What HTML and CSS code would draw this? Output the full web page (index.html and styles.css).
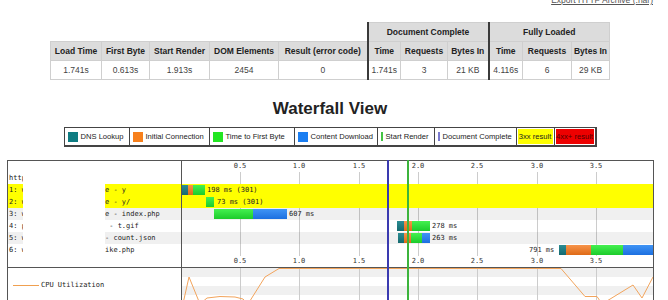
FILE: index.html
```html
<!DOCTYPE html>
<html lang="en">
  <head>
    <meta charset="UTF-8" />
    <title>Waterfall View</title>
    <link rel="stylesheet" href="styles.css">
  </head>
  <body>
    <div class="page">
      <div class="export"><a href="#">Export HTTP Archive (.har)</a></div>

      <table class="stats">
        <colgroup>
          <col class="c1"><col class="c2"><col class="c3"><col class="c4"><col class="c5">
          <col class="c6"><col class="c7"><col class="c8">
          <col class="c9"><col class="c10"><col class="c11">
        </colgroup>
        <tr>
          <th colspan="5" class="blank"></th>
          <th colspan="3" class="sep">Document Complete</th>
          <th colspan="3" class="sep">Fully Loaded</th>
        </tr>
        <tr>
          <th>Load Time</th><th>First Byte</th><th>Start Render</th><th>DOM Elements</th><th>Result (error code)</th>
          <th class="sep">Time</th><th>Requests</th><th>Bytes In</th>
          <th class="sep">Time</th><th>Requests</th><th>Bytes In</th>
        </tr>
        <tr>
          <td>1.741s</td><td>0.613s</td><td>1.913s</td><td>2454</td><td>0</td>
          <td class="sep">1.741s</td><td>3</td><td>21 KB</td>
          <td class="sep">4.116s</td><td>6</td><td>29 KB</td>
        </tr>
      </table>

      <h2 class="title">Waterfall View</h2>

      <div class="legend">
        <div class="lg w1"><span class="sw dns"></span>DNS Lookup</div>
        <div class="lg w2"><span class="sw conn"></span>Initial Connection</div>
        <div class="lg w3"><span class="sw ttfb"></span>Time to First Byte</div>
        <div class="lg w4"><span class="sw dl"></span>Content Download</div>
        <div class="lg w5"><span class="mark render"></span>Start Render</div>
        <div class="lg w6"><span class="mark doc"></span>Document Complete</div>
        <div class="lg w7"><span class="hl yellow">3xx result</span></div>
        <div class="lg w8"><span class="hl red">4xx+ result</span></div>
      </div>

      <div class="wf">
        <div class="row axis">
          <div class="lbl"></div>
          <div class="track">
            <span class="tk" style="left:58px">0.5</span>
            <span class="tk" style="left:117px">1.0</span>
            <span class="tk" style="left:177px">1.5</span>
            <span class="tk" style="left:236px">2.0</span>
            <span class="tk" style="left:295px">2.5</span>
            <span class="tk" style="left:355px">3.0</span>
            <span class="tk" style="left:414px">3.5</span>
          </div>
        </div>

        <div class="rows">
          <div class="grid">
            <i class="gl" style="left:58px"></i>
            <i class="gl" style="left:117px"></i>
            <i class="gl" style="left:177px"></i>
            <i class="gl" style="left:236px"></i>
            <i class="gl" style="left:295px"></i>
            <i class="gl" style="left:355px"></i>
            <i class="gl" style="left:414px"></i>
          </div>

          <div class="row">
            <div class="lbl"><span class="la">http</span><span class="gap"></span><span class="lb"></span></div>
            <div class="track"></div>
          </div>

          <div class="row redirect">
            <div class="lbl"><span class="la">1: w</span><span class="gap"></span><span class="lb">e - y</span></div>
            <div class="track">
              <div class="bar" style="left:0"><i class="dns" style="width:6px"></i><i class="conn" style="width:5px"></i><i class="ttfb" style="width:12px"></i></div>
              <span class="ms" style="left:25px">198 ms (301)</span>
            </div>
          </div>

          <div class="row redirect">
            <div class="lbl"><span class="la">2: w</span><span class="gap"></span><span class="lb">e - y/</span></div>
            <div class="track">
              <div class="bar" style="left:24px"><i class="ttfb" style="width:8px"></i></div>
              <span class="ms" style="left:35px">73 ms (301)</span>
            </div>
          </div>

          <div class="row odd">
            <div class="lbl"><span class="la">3: w</span><span class="gap"></span><span class="lb">e - index.php</span></div>
            <div class="track">
              <div class="bar" style="left:32px"><i class="ttfb" style="width:39px"></i><i class="dl" style="width:34px"></i></div>
              <span class="ms" style="left:107px">607 ms</span>
            </div>
          </div>

          <div class="row">
            <div class="lbl"><span class="la">4: p</span><span class="gap"></span><span class="lb"> - t.gif</span></div>
            <div class="track">
              <div class="bar" style="left:215px"><i class="dns" style="width:7px"></i><i class="conn" style="width:8px"></i><i class="ttfb" style="width:18px"></i></div>
              <span class="ms" style="left:250px">278 ms</span>
            </div>
          </div>

          <div class="row odd">
            <div class="lbl"><span class="la">5: w</span><span class="gap"></span><span class="lb">- count.json</span></div>
            <div class="track">
              <div class="bar" style="left:216px"><i class="dns" style="width:6px"></i><i class="conn" style="width:7px"></i><i class="ttfb" style="width:11px"></i><i class="dl" style="width:8px"></i></div>
              <span class="ms" style="left:250px">263 ms</span>
            </div>
          </div>

          <div class="row">
            <div class="lbl"><span class="la">6: w</span><span class="gap"></span><span class="lb">ike.php</span></div>
            <div class="track">
              <span class="ms" style="left:347px">791 ms</span>
              <div class="bar" style="left:377px"><i class="dns" style="width:7px"></i><i class="conn" style="width:25px"></i><i class="ttfb" style="width:32px"></i><i class="dl" style="width:30px"></i></div>
            </div>
          </div>
        </div>

        <div class="row axis">
          <div class="lbl"></div>
          <div class="track">
            <span class="tk" style="left:58px">0.5</span>
            <span class="tk" style="left:117px">1.0</span>
            <span class="tk" style="left:177px">1.5</span>
            <span class="tk" style="left:236px">2.0</span>
            <span class="tk" style="left:295px">2.5</span>
            <span class="tk" style="left:355px">3.0</span>
            <span class="tk" style="left:414px">3.5</span>
          </div>
        </div>

        <div class="cpu">
          <div class="cpu-lbl"><span class="cpu-key"></span>CPU Utilization</div>
          <div class="track">
            <svg width="471" height="56" viewBox="0 0 471 56">
              <rect x="0" y="0" width="471" height="9" fill="#f0f0f0"/>
              <rect x="0" y="18" width="471" height="9" fill="#f0f0f0"/>
              <rect x="0" y="36" width="471" height="9" fill="#f0f0f0"/>
              <g stroke="#cccccc" stroke-width="1">
                <line x1="58.5" y1="0" x2="58.5" y2="56"/>
                <line x1="117.5" y1="0" x2="117.5" y2="56"/>
                <line x1="177.5" y1="0" x2="177.5" y2="56"/>
                <line x1="236.5" y1="0" x2="236.5" y2="56"/>
                <line x1="295.5" y1="0" x2="295.5" y2="56"/>
                <line x1="355.5" y1="0" x2="355.5" y2="56"/>
                <line x1="414.5" y1="0" x2="414.5" y2="56"/>
              </g>
              <polyline fill="none" stroke="#f2a45c" stroke-width="1"
                points="0,40 7,9 18,36 25,30 38,28.5 53,29 61,31 66,36 83,9 97,0.5 379,0.5 403,28.5 415,28.5 420,36 451,17 460,30 471,9"/>
            </svg>
          </div>
        </div>

        <i class="mk doc-line"></i>
        <i class="mk render-line"></i>
      </div>
    </div>
  </body>
</html>
```

FILE: styles.css
```css
body {
  margin: 0;
  font-family: "Liberation Sans", Arial, sans-serif;
  color: #222;
  background: #fff;
}

.page {
  width: 660px;
}

.export {
  margin-top: -5px;
  height: 10px;
  line-height: 10px;
  padding-right: 7px;
  text-align: right;
  font-size: 8.5px;
}

.export a {
  color: #555;
}

/* summary table */
.stats {
  margin: 17px auto 0;
  border-collapse: collapse;
  font-size: 8.5px;
}

.stats th,
.stats td {
  border: 1px solid #cfcfcf;
  padding: 0;
  line-height: 18px;
  text-align: center;
  white-space: nowrap;
}

.stats th {
  background: #dcdcdc;
  color: #222;
}

.stats td {
  color: #444;
}

.stats .blank {
  background: none;
  border: none;
}

.stats .sep {
  border-left: 2px solid #3a3a3a;
}

.stats .c1 { width: 51px; }
.stats .c2 { width: 48px; }
.stats .c3 { width: 60px; }
.stats .c4 { width: 69px; }
.stats .c5 { width: 89px; }
.stats .c6 { width: 33px; }
.stats .c7 { width: 47px; }
.stats .c8 { width: 41px; }
.stats .c9 { width: 34px; }
.stats .c10 { width: 49px; }
.stats .c11 { width: 38px; }

.title {
  margin: 19px 0 0;
  font-size: 17px;
  line-height: 20px;
  font-weight: bold;
  text-align: center;
  color: #222;
}

/* legend */
.legend {
  display: flex;
  width: 533px;
  height: 20px;
  box-sizing: border-box;
  margin: 8px auto 0;
  border: 1px solid #444;
  border-right-width: 2px;
  border-bottom-width: 2px;
  font-size: 7.6px;
  color: #222;
}

.lg {
  display: flex;
  align-items: center;
  flex: none;
  box-sizing: border-box;
  padding-left: 3px;
  border-left: 1px solid #444;
  white-space: nowrap;
}

.lg:first-child {
  border-left: none;
}

.w1 { width: 64px; }
.w2 { width: 80px; }
.w3 { width: 85px; }
.w4 { width: 83px; }
.w5 { width: 57px; }
.w6 { width: 82px; }
.w7 { width: 38px; padding: 1px; }
.w8 { width: 41px; padding: 1px; }

.sw {
  width: 10px;
  height: 10px;
  margin-right: 3px;
  flex: none;
}

.sw.dns { background: #0e7c82; }
.sw.conn { background: #f7801c; }
.sw.ttfb { background: #22e622; }
.sw.dl { background: #1a7ef2; }

.mark {
  width: 2px;
  height: 9px;
  margin-right: 3px;
  flex: none;
}

.mark.render { background: #44c444; }
.mark.doc { background: #7b7bd0; }

.hl {
  display: block;
  width: 100%;
  height: 100%;
  line-height: 15px;
  text-align: center;
}

.hl.yellow { background: #ffff00; color: #222; }
.hl.red { background: #ee0000; color: #500; }

/* waterfall */
.wf {
  position: relative;
  width: 647px;
  box-sizing: border-box;
  margin: 13px 0 0 7px;
  border: 1px solid #555;
  font-family: "DejaVu Sans Mono", monospace;
  font-size: 7px;
  color: #222;
}

.row {
  position: relative;
  z-index: 1;
  display: flex;
  height: 12px;
  line-height: 12px;
}

.row.axis {
  height: 11px;
  line-height: 11px;
}

.row.redirect { background: #ffff00; }
.row.odd { background: rgba(0, 0, 0, 0.06); }

.lbl {
  display: flex;
  width: 174px;
  flex: none;
  box-sizing: border-box;
  border-right: 1px solid #555;
}

.la {
  width: 15px;
  flex: none;
  box-sizing: border-box;
  padding-left: 1px;
  overflow: hidden;
  white-space: nowrap;
}

.gap {
  width: 82px;
  flex: none;
  background: #fff;
}

.lb {
  flex: 1;
  overflow: hidden;
  white-space: pre;
}

.track {
  position: relative;
  flex: 1;
}

.tk {
  position: absolute;
  top: 0;
  transform: translateX(-50%);
  color: #333;
}

.rows {
  position: relative;
}

.grid {
  position: absolute;
  top: 0;
  bottom: 0;
  left: 174px;
  right: 0;
}

.gl {
  position: absolute;
  top: 0;
  bottom: 0;
  width: 1px;
  background: #cccccc;
}

.bar {
  position: absolute;
  top: 1px;
  height: 10px;
  display: flex;
}

.bar i {
  display: block;
  height: 100%;
}

.bar .dns { background: linear-gradient(#2c8d93, #146a70); }
.bar .conn { background: linear-gradient(#f7944a, #de6a16); }
.bar .ttfb { background: linear-gradient(#44f050, #1ccb2b); }
.bar .dl { background: linear-gradient(#4094f5, #1c6fe0); }

.ms {
  position: absolute;
  top: 0;
  white-space: nowrap;
  color: #222;
}

/* cpu graph */
.cpu {
  display: flex;
  height: 56px;
  border-top: 1px solid #555;
}

.cpu-lbl {
  width: 174px;
  flex: none;
  box-sizing: border-box;
  padding-top: 12px;
  line-height: 10px;
  border-right: 1px solid #555;
  white-space: nowrap;
}

.cpu-key {
  display: inline-block;
  width: 26px;
  height: 0;
  margin: 0 2px 0 5px;
  vertical-align: middle;
  border-top: 1px solid #f0a050;
}

.cpu svg {
  display: block;
}

/* start render / document complete lines */
.mk {
  position: absolute;
  z-index: 2;
  top: -1px;
  bottom: 0;
  width: 2px;
}

.doc-line {
  left: 379px;
  background: #3a3ab0;
}

.render-line {
  left: 399px;
  background: #3cb43c;
}
```
